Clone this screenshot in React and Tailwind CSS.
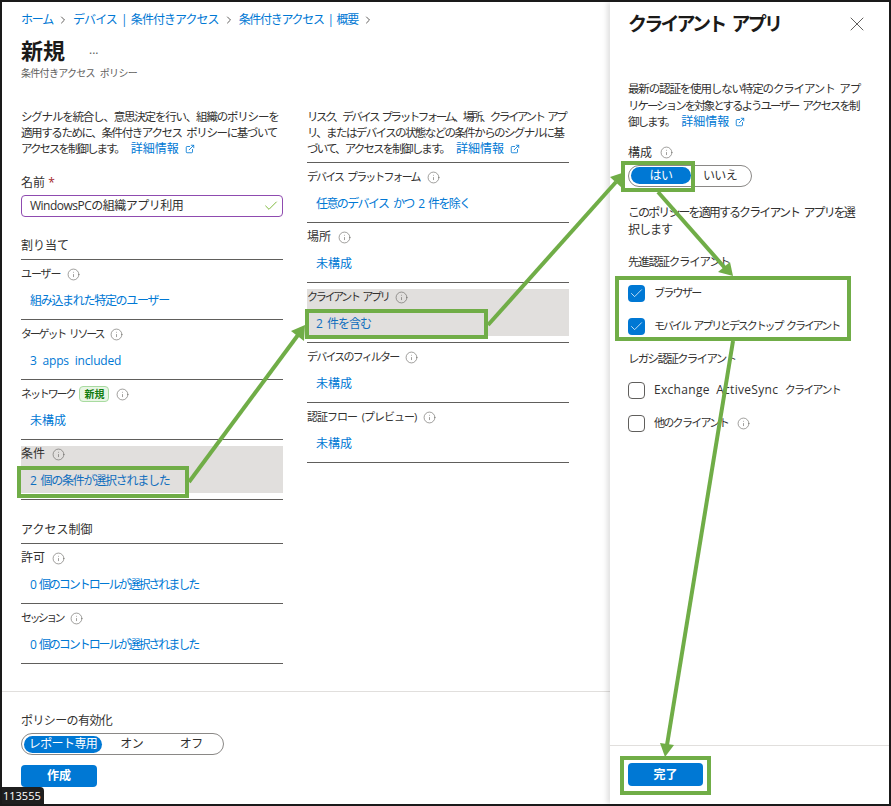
import { ChevronRight, Check, X, ExternalLink, Info } from "lucide-react";

const font = { fontFamily: '"Open Sans", "Noto Sans CJK JP", sans-serif' };

const InfoIcon = () => <Info size={13} strokeWidth={1.1} className="text-[#605e5c] shrink-0" />;

const LearnMore = () => (
  <span className="ml-[7px] text-xs text-[#0078d4] whitespace-nowrap tracking-normal">
    詳細情報
    <ExternalLink size={10} className="inline ml-1.5 mb-0.5" />
  </span>
);

// Label + link row with the dark rule under it
const Row = ({ label, value, active, badge, labelClass = "text-[11px] tracking-[-1.5px]", valueClass = "tracking-[-1px]" }) => (
  <div className="border-b border-[#605e5c]">
    <div className={`h-[47px] mt-[6px] mb-[6px] [word-spacing:3px] ${active ? "bg-[#e1dfdd]" : ""}`}>
      <div className="flex items-center gap-[7px] h-4 text-[#323130]">
        <span className={`whitespace-nowrap ${labelClass}`}>{label}</span>
        {badge && (
          <span className="h-4 flex items-center text-[10px] leading-none font-bold text-[#107c10] bg-[#e8f5e4] border border-[#a8dba0] rounded-sm px-1 -ml-[2px]">
            {badge}
          </span>
        )}
        <InfoIcon />
      </div>
      <div className={`pl-[9px] mt-[11px] text-xs leading-4 whitespace-nowrap ${active ? "text-[#106ebe]" : "text-[#0078d4]"} ${valueClass}`}>
        {value}
      </div>
    </div>
  </div>
);

const Section = ({ children }) => (
  <div className="h-[28px] flex items-end pb-[5px] border-b border-[#605e5c] text-xs text-[#323130]">{children}</div>
);

const Toggle = ({ items, first, className }) => (
  <div className={`flex items-center h-[22px] rounded-full border border-[#8a8886] p-[2px] text-xs whitespace-nowrap ${className}`}>
    {items.map((item, i) =>
      i === 0 ? (
        <span key={item} className={`flex items-center justify-center h-[17px] rounded-full bg-[#0078d4] text-white tracking-[-0.6px] ${first}`}>
          {item}
        </span>
      ) : (
        <span key={item} className="flex-1 text-center text-[#323130] tracking-[-0.6px]">
          {item}
        </span>
      )
    )}
  </div>
);

const CheckRow = ({ children, checked, info, track = "tracking-[-1.7px]" }) => (
  <div className={`flex items-center gap-[9px] h-[17px] text-[11px] text-[#323130] whitespace-nowrap [word-spacing:3px] ${track}`}>
    <span
      className={`flex items-center justify-center size-[17px] rounded-sm shrink-0 ${
        checked ? "bg-[#0078d4]" : "border border-[#605e5c]"
      }`}
    >
      {checked && <Check size={15} strokeWidth={1.2} className="text-white" />}
    </span>
    <span>{children}</span>
    {info && <InfoIcon />}
  </div>
);

// Green callouts drawn on top of the screenshot
const Callout = ({ className }) => (
  <div className={`absolute border-[4px] border-[#70ad47] ${className}`} />
);

const Arrows = () => (
  <svg className="absolute inset-0 pointer-events-none" width="891" height="806" viewBox="0 0 891 806">
    <g stroke="#70ad47" strokeWidth="4" fill="none">
      <line x1="189" y1="482" x2="298" y2="335" />
      <line x1="488" y1="325" x2="616" y2="182" />
      <line x1="658" y1="192" x2="725" y2="268" />
      <line x1="733" y1="341" x2="667" y2="745" />
    </g>
    <g fill="#70ad47">
      <polygon points="305,325 304,341 291,331" />
      <polygon points="625,172 622,188 610,177" />
      <polygon points="733,276 718,272 730,262" />
      <polygon points="665,757 660,743 674,745" />
    </g>
  </svg>
);

export default function App() {
  return (
    <div style={font} className="relative w-[891px] h-[806px] overflow-hidden bg-white border-2 border-[#1a1a1a] box-border">
      <div className="flex h-full">
        {/* Main blade */}
        <div className="w-[608px] flex flex-col">
          <div className="flex-1 pl-[19px]">
            <nav className="flex items-center gap-[4px] h-4 mt-[10px] text-xs text-[#0078d4] whitespace-nowrap [word-spacing:2px]">
              <span className="tracking-[-1.2px]">ホーム</span>
              <ChevronRight size={12} className="text-[#605e5c]" />
              <span className="tracking-[-0.95px]">デバイス | 条件付きアクセス</span>
              <ChevronRight size={12} className="text-[#605e5c]" />
              <span className="tracking-[-1.3px]">条件付きアクセス | 概要</span>
              <ChevronRight size={12} className="text-[#605e5c]" />
            </nav>
            <div className="flex items-center h-7 mt-[8px]">
              <h1 className="text-[22px] font-bold text-[#1b1a19]">新規</h1>
              <span className="ml-6 text-xs text-[#605e5c]">...</span>
            </div>
            <div className="mt-[1px] text-[10px] leading-4 text-[#605e5c] tracking-[-0.7px] [word-spacing:3px]">条件付きアクセス ポリシー</div>

            <div className="flex gap-6 mt-[28px]">
              {/* Left column */}
              <div className="w-[262px]">
                <div className="text-[11.5px] leading-4 text-[#323130] whitespace-nowrap [word-spacing:3px]">
                  <div className="tracking-[-1.2px]">シグナルを統合し、意思決定を行い、組織のポリシーを</div>
                  <div className="tracking-[-1.4px]">適用するために、条件付きアクセス ポリシーに基づいて</div>
                  <div className="tracking-[-2px]">アクセスを制御します。<LearnMore /></div>
                </div>
                <label className="block mt-[18px] h-4 text-xs leading-4 text-[#323130]">
                  名前 <span className="text-[#a4262c]">*</span>
                </label>
                <div className="flex items-center justify-between h-[22px] mt-[4px] px-2 border border-[#8f4bb0] rounded-sm text-xs text-[#323130]">
                  <span className="tracking-[-0.5px]">WindowsPCの組織アプリ利用</span>
                  <Check size={16} strokeWidth={1.5} className="text-[#7fba3e] -mr-[5px]" />
                </div>
                <div className="mt-[15px]">
                  <Section>割り当て</Section>
                </div>
                <Row label="ユーザー" labelClass="text-[11px] tracking-[-1.1px]" value="組み込まれた特定のユーザー" valueClass="tracking-[-1.3px]" />
                <Row label="ターゲット リソース" labelClass="text-[11px] tracking-[-2.2px]" value="3 apps included" valueClass="tracking-[-0.2px]" />
                <Row label="ネットワーク" labelClass="text-[11px] tracking-[-2.1px]" value="未構成" valueClass="tracking-normal" badge="新規" />
                <Row label="条件" labelClass="text-xs" value="2 個の条件が選択されました" valueClass="tracking-[-1.25px]" active />
                <div className="mt-[16px]">
                  <Section>アクセス制御</Section>
                </div>
                <Row label="許可" labelClass="text-xs" value="0 個のコントロールが選択されました" valueClass="tracking-[-2.05px]" />
                <Row label="セッション" labelClass="text-[11px] tracking-[-2.6px]" value="0 個のコントロールが選択されました" valueClass="tracking-[-2.05px]" />
              </div>

              {/* Right column */}
              <div className="w-[262px]">
                <div className="h-[54px] border-b border-[#605e5c] text-[11.5px] leading-4 text-[#323130] whitespace-nowrap [word-spacing:3px]">
                  <div className="tracking-[-2.45px]">リスク、デバイス プラットフォーム、場所、クライアント アプ</div>
                  <div className="tracking-[-1.6px]">リ、またはデバイスの状態などの条件からのシグナルに基</div>
                  <div className="tracking-[-1.85px]">づいて、アクセスを制御します。<LearnMore /></div>
                </div>
                <Row label="デバイス プラットフォーム" labelClass="text-[11px] tracking-[-1.9px]" value="任意のデバイス かつ 2 件を除く" valueClass="tracking-[-1.6px]" />
                <Row label="場所" labelClass="text-xs" value="未構成" valueClass="tracking-normal" />
                <Row label="クライアント アプリ" labelClass="text-[11px] tracking-[-2.3px]" value="2 件を含む" valueClass="tracking-[-1px]" active />
                <Row label="デバイスのフィルター" labelClass="text-[11px] tracking-[-1.8px]" value="未構成" valueClass="tracking-normal" />
                <Row label="認証フロー (プレビュー)" labelClass="text-[11px] tracking-[-1px]" value="未構成" valueClass="tracking-normal" />
              </div>
            </div>
          </div>

          {/* Blade footer */}
          <div className="h-[113px] border-t border-[#e1dfdd] pl-[19px] pt-[21px]">
            <div className="h-4 text-xs leading-4 text-[#323130] tracking-[-0.6px]">ポリシーの有効化</div>
            <Toggle items={["レポート専用", "オン", "オフ"]} first="w-[78px]" className="w-[203px] mt-[4px]" />
            <button className="block w-[76px] h-[22px] mt-[10px] bg-[#0078d4] rounded-sm text-xs font-bold text-white">作成</button>
          </div>
        </div>

        {/* Side panel */}
        <aside className="w-[279px] flex flex-col shadow-[-3px_0_5px_rgba(0,0,0,0.12)]">
          <div className="flex-1 px-[18px]">
            <div className="flex items-center justify-between h-6 mt-[10px]">
              <h2 className="text-[19px] font-bold text-[#1b1a19] tracking-[-2.8px] [word-spacing:5px] whitespace-nowrap">クライアント アプリ</h2>
              <X size={24} strokeWidth={1} className="text-[#605e5c] mr-[2px]" />
            </div>
            <div className="mt-[45px] text-[11.5px] leading-[16.5px] text-[#323130] whitespace-nowrap [word-spacing:3px]">
              <div className="tracking-[-1.15px]">最新の認証を使用しない特定のクライアント アプ</div>
              <div className="tracking-[-2px]">リケーションを対象とするようユーザー アクセスを制</div>
              <div className="tracking-[-2px]">御します。<LearnMore /></div>
            </div>
            <div className="flex items-center gap-2 h-4 mt-[14px] text-xs text-[#323130]">
              構成 <InfoIcon />
            </div>
            <Toggle items={["はい", "いいえ"]} first="w-[60px]" className="w-[124px] mt-[4px]" />
            <div className="mt-[17px] text-xs leading-[17px] text-[#323130] whitespace-nowrap [word-spacing:3px]">
              <div className="tracking-[-1.9px]">このポリシーを適用するクライアント アプリを選</div>
              <div className="tracking-[-1px]">択します</div>
            </div>
            <div className="mt-[16px] h-4 text-[11.5px] leading-4 text-[#323130] tracking-[-1.3px]">先進認証クライアント</div>
            <div className="flex flex-col gap-4 mt-[15px]">
              <CheckRow checked>ブラウザー</CheckRow>
              <CheckRow checked track="tracking-[-2.1px]">モバイル アプリとデスクトップ クライアント</CheckRow>
            </div>
            <div className="mt-[16px] h-4 text-[11.5px] leading-4 text-[#323130] tracking-[-1.7px]">レガシ認証クライアント</div>
            <div className="flex flex-col gap-4 mt-[15px]">
              <CheckRow>
                <span className="text-xs tracking-[0.3px]">Exchange ActiveSync </span>クライアント
              </CheckRow>
              <CheckRow info>他のクライアント</CheckRow>
            </div>
          </div>
          <div className="h-[59px] border-t border-[#e1dfdd] pl-[18px] pt-[17px]">
            <button className="block w-[75px] h-[23px] bg-[#0078d4] rounded-sm text-xs font-bold text-white">完了</button>
          </div>
        </aside>
      </div>

      {/* Session tag */}
      <div className="absolute left-0 bottom-0 w-[42px] h-[17px] bg-[#1f1f1f] rounded-tr-sm text-[11px] leading-[17px] pl-[1px] text-white">113555</div>

      {/* Annotations: offsets account for the 2px frame */}
      <div className="absolute -inset-[2px]">
        <Callout className="left-[17px] top-[466px] w-[172px] h-[32px]" />
        <Callout className="left-[305px] top-[309px] w-[183px] h-[30px]" />
        <Callout className="left-[621px] top-[161px] w-[74px] h-[31px]" />
        <Callout className="left-[615px] top-[276px] w-[236px] h-[65px]" />
        <Callout className="left-[620px] top-[756px] w-[91px] h-[39px]" />
        <Arrows />
      </div>
    </div>
  );
}
